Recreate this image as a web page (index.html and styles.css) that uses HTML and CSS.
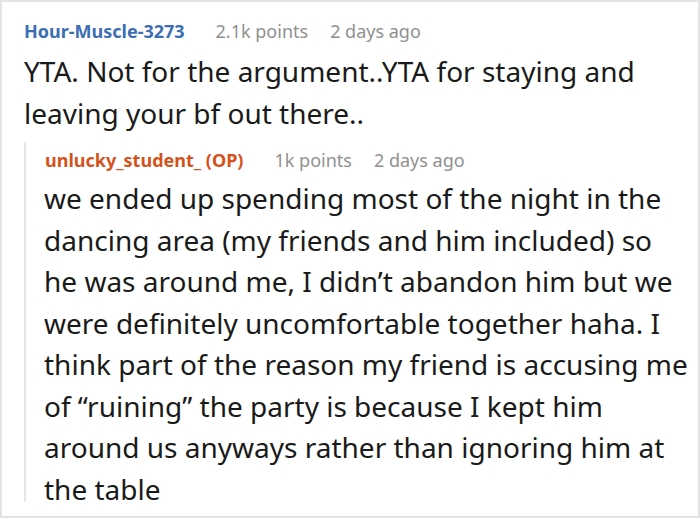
FILE: index.html
```html
<!DOCTYPE html>
<html>
<head>
<meta charset="utf-8">
<link rel="stylesheet" href="styles.css">
</head>
<body>
<div class="frame">
  <div class="comment">
    <div class="meta">
      <span class="author">Hour-Muscle-3273</span>
      <span class="info">2.1k points</span>
      <span class="info">2 days ago</span>
    </div>
    <p class="text">YTA. Not for the argument..YTA for staying and leaving your bf out there..</p>
    <div class="reply">
      <div class="meta">
        <span class="author op">unlucky_student_ (OP)</span>
        <span class="info">1k points</span>
        <span class="info">2 days ago</span>
      </div>
      <p class="text">we ended up spending most of the night in the dancing area (my friends and him included) so he was around me, I didn’t abandon him but we were definitely uncomfortable together haha. I think part of the reason my friend is accusing me of “ruining” the party is because I kept him around us anyways rather than ignoring him at the table</p>
    </div>
  </div>
</div>
</body>
</html>
```
FILE: styles.css
```css
html, body {
  margin: 0;
  padding: 0;
  background: #fff;
}
.frame {
  width: 700px;
  height: 518px;
  box-sizing: border-box;
  border: 2px solid #e4e4e4;
  padding: 11px 8px 0 22px;
  overflow: hidden;
  font-family: "Noto Sans", "Open Sans", sans-serif;
  color: #1a1a1a;
}
.meta {
  display: flex;
  gap: 22px;
  align-items: baseline;
  height: 36px;
  line-height: 36px;
  font-size: 18px;
}
.author {
  font-weight: 700;
  color: #3c6eb4;
  margin-right: 9px;
}
.author.op {
  color: #d4531c;
}
.info {
  color: #909090;
}
.text {
  margin: 2px 0 0;
  font-size: 28px;
  line-height: 41.5px;
}
.reply {
  margin-top: 8px;
  height: 360px;
  border-left: 2px solid #e6e6e6;
  padding-left: 18px;
}
.reply .meta {
  padding-left: 1px;
}
.reply .text {
  margin-top: 0;
}
```
